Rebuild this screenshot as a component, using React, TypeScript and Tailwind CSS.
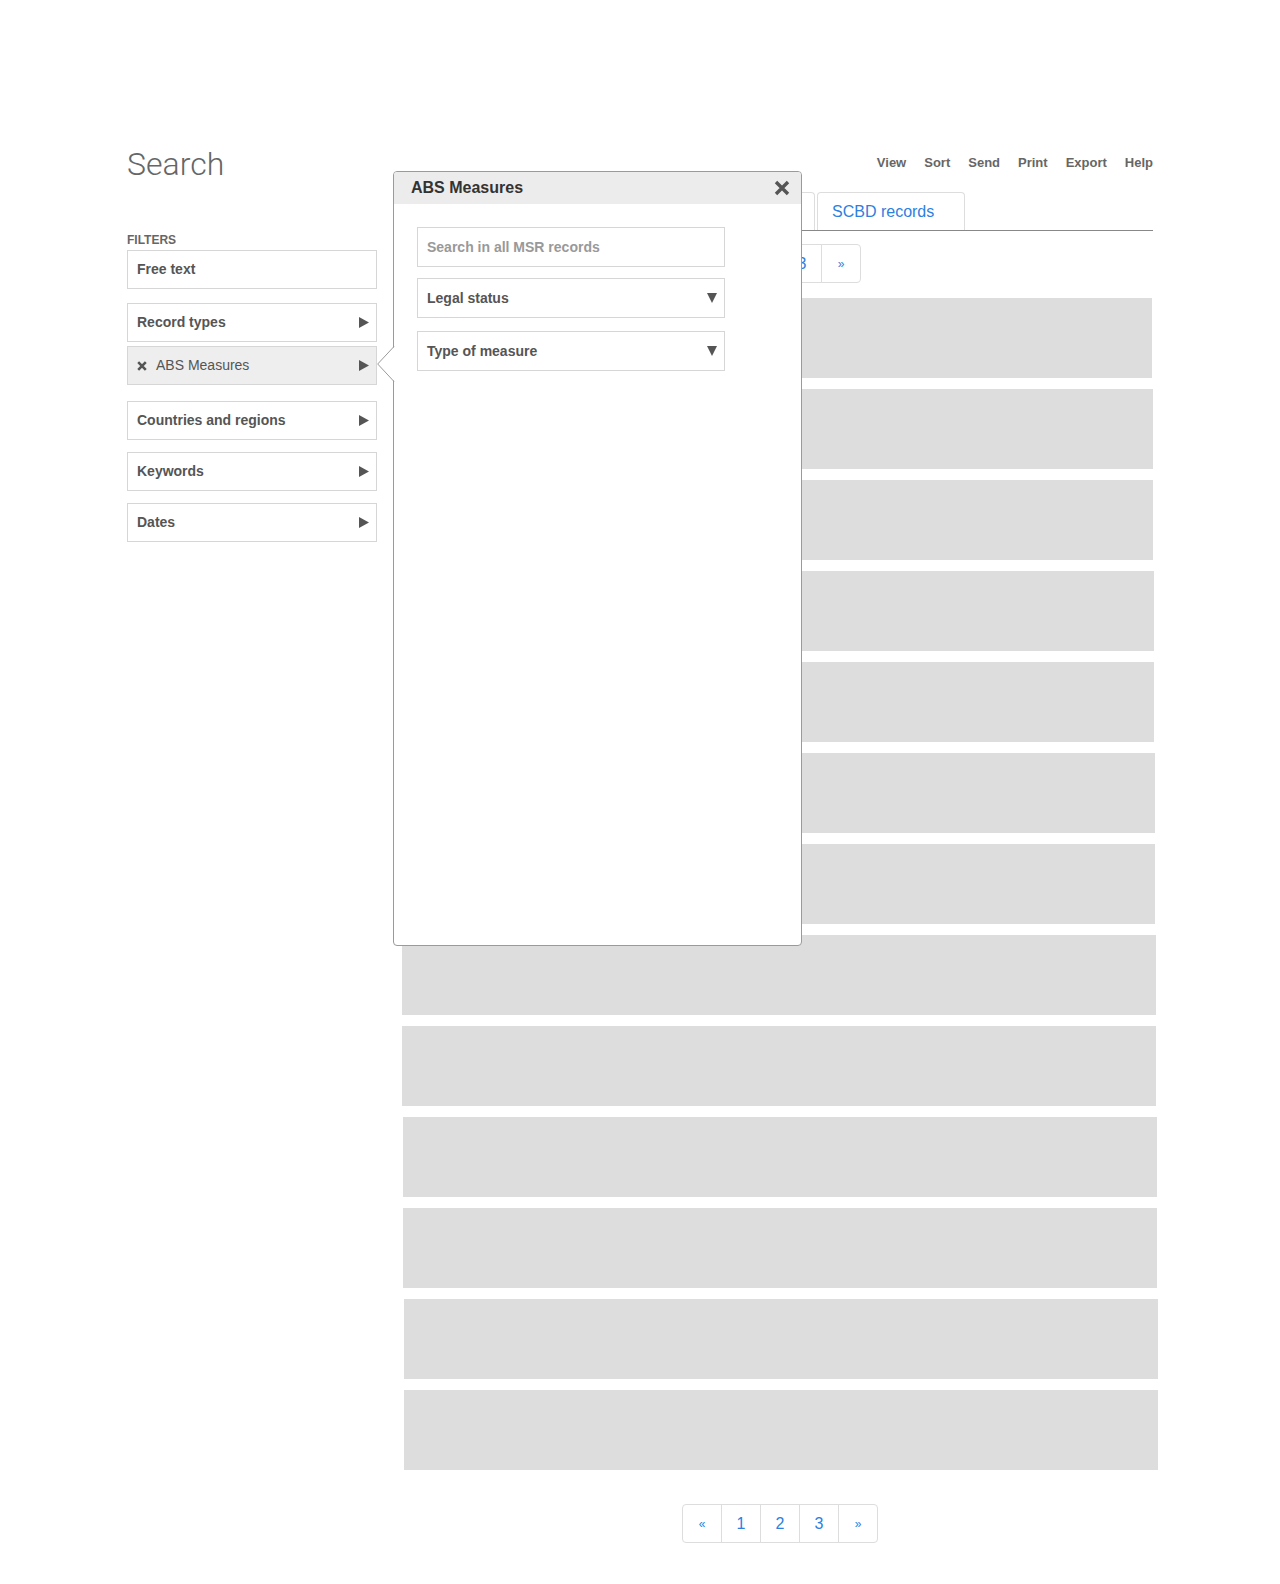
import React from 'react';

function RightTriangle() {
  return (
    <svg width="10" height="11" viewBox="0 0 10 11" className="shrink-0">
      <polygon points="0,0 10,5.5 0,11" fill="#555" />
    </svg>
  );
}

function DownTriangle() {
  return (
    <svg width="10" height="10" viewBox="0 0 10 10" className="shrink-0">
      <polygon points="0,0 10,0 5,10" fill="#555" />
    </svg>
  );
}

function FilterRow({
  label,
  className = '',
  arrow = true,
}: {
  label: string;
  className?: string;
  arrow?: boolean;
}) {
  return (
    <div
      className={`flex h-[39px] items-center justify-between border border-[#d6d6d6] bg-white pl-[9px] pr-[7px] text-[14px] font-bold text-[#555] ${className}`}
    >
      <span>{label}</span>
      {arrow && <RightTriangle />}
    </div>
  );
}

function Pager({ className = '' }: { className?: string }) {
  const cells = ['«', '1', '2', '3', '»'];
  return (
    <div className={`flex ${className}`}>
      {cells.map((c, i) => (
        <div
          key={i}
          className={`flex h-[39px] w-[40px] items-center justify-center border border-[#dddddd] bg-white text-[#2d7fe0] ${
            i === 0 ? 'rounded-l-[4px]' : '-ml-px'
          } ${i === cells.length - 1 ? 'rounded-r-[4px]' : ''} ${
            c === '«' || c === '»' ? 'text-[12px]' : 'text-[16px]'
          }`}
        >
          {c}
        </div>
      ))}
    </div>
  );
}

export default function App() {
  const rows = Array.from({ length: 13 });
  const menu = ['View', 'Sort', 'Send', 'Print', 'Export', 'Help'];

  return (
    <div className="min-h-screen bg-white font-['Liberation_Sans',Arial,sans-serif]">
      <div className="relative mx-auto flex w-[1026px] gap-[21px] pt-[144px] pb-[41px]">
        {/* Left column */}
        <aside className="w-[250px] shrink-0">
          <h1 className="h-[40px] font-['Roboto',sans-serif] text-[32px] font-light leading-[40px] text-[#666]">
            Search
          </h1>
          <div className="mt-[48px] text-[12px] font-bold uppercase leading-[16px] text-[#666]">
            Filters
          </div>
          <FilterRow label="Free text" className="mt-[2px]" arrow={false} />
          <FilterRow label="Record types" className="mt-[14px]" />
          <div className="mt-[4px] flex h-[39px] items-center justify-between border border-[#d6d6d6] bg-[#eeeeee] pl-[9px] pr-[7px] text-[14px] text-[#555]">
            <span className="flex items-center">
              <svg width="10" height="10" viewBox="0 0 10 10" className="mr-[9px]">
                <path d="M1.2 1.2 L8.8 8.8 M8.8 1.2 L1.2 8.8" stroke="#555" strokeWidth="2.6" />
              </svg>
              ABS Measures
            </span>
            <RightTriangle />
          </div>
          <FilterRow label="Countries and regions" className="mt-[16px]" />
          <FilterRow label="Keywords" className="mt-[12px]" />
          <FilterRow label="Dates" className="mt-[12px]" />
        </aside>

        {/* Main column */}
        <main className="min-w-0 flex-1 pt-[9px]">
          <div className="flex h-[20px] items-center justify-end gap-[18px] text-[13px] font-bold text-[#666]">
            {menu.map((m) => (
              <span key={m}>{m}</span>
            ))}
          </div>

          <div className="mt-[19px] flex gap-[2px] border-b border-[#888]">
            {['All records', 'National records', 'SCBD records'].map((t, i) => (
              <div
                key={t}
                className={`flex h-[38px] items-center rounded-t-[4px] border border-b-0 border-[#dddddd] pl-[14px] text-[16px] text-[#2d7fe0] ${
                  i === 0 ? 'w-[267px]' : 'w-[148px]'
                }`}
              >
                {t}
              </div>
            ))}
          </div>

          <Pager className="mt-[13px] ml-[267px]" />

          <div className="mt-[15px] flex flex-col gap-[11px]">
            {rows.map((_, i) => (
              <div
                key={i}
                className="h-[80px] w-[754px] bg-[#dddddd]"
                style={{ marginLeft: i * 0.5 }}
              />
            ))}
          </div>

          <Pager className="mt-[34px] ml-[284px]" />
        </main>

        {/* ABS Measures popover */}
        <div className="absolute top-[171px] left-[266px] h-[775px] w-[409px] rounded-[4px] border border-[#9a9a9a] bg-white">
          <svg
            width="18"
            height="36"
            viewBox="0 0 18 36"
            className="absolute top-[174px] left-[-17px]"
          >
            <polygon points="18,0 0.5,18 18,36" fill="#fff" />
            <path d="M17 0.5 L0.7 18 L17 35.5" fill="none" stroke="#9a9a9a" strokeWidth="1" />
          </svg>
          <div className="flex h-[32px] items-center justify-between rounded-t-[3px] bg-[#ececec] pl-[17px] pr-[11px]">
            <span className="text-[16px] font-bold text-[#333]">ABS Measures</span>
            <svg width="16" height="16" viewBox="0 0 16 16">
              <path d="M2 2 L14 14 M14 2 L2 14" stroke="#555" strokeWidth="3.4" />
            </svg>
          </div>
          <div className="flex flex-col px-[23px] pt-[23px]">
            <div className="flex h-[40px] w-[308px] items-center border border-[#d6d6d6] pl-[9px] text-[14px] font-bold text-[#999]">
              Search in all MSR records
            </div>
            <div className="mt-[11px] flex h-[40px] w-[308px] items-center justify-between border border-[#d6d6d6] pl-[9px] pr-[7px] text-[14px] font-bold text-[#555]">
              <span>Legal status</span>
              <DownTriangle />
            </div>
            <div className="mt-[13px] flex h-[40px] w-[308px] items-center justify-between border border-[#d6d6d6] pl-[9px] pr-[7px] text-[14px] font-bold text-[#555]">
              <span>Type of measure</span>
              <DownTriangle />
            </div>
          </div>
        </div>
      </div>
    </div>
  );
}
